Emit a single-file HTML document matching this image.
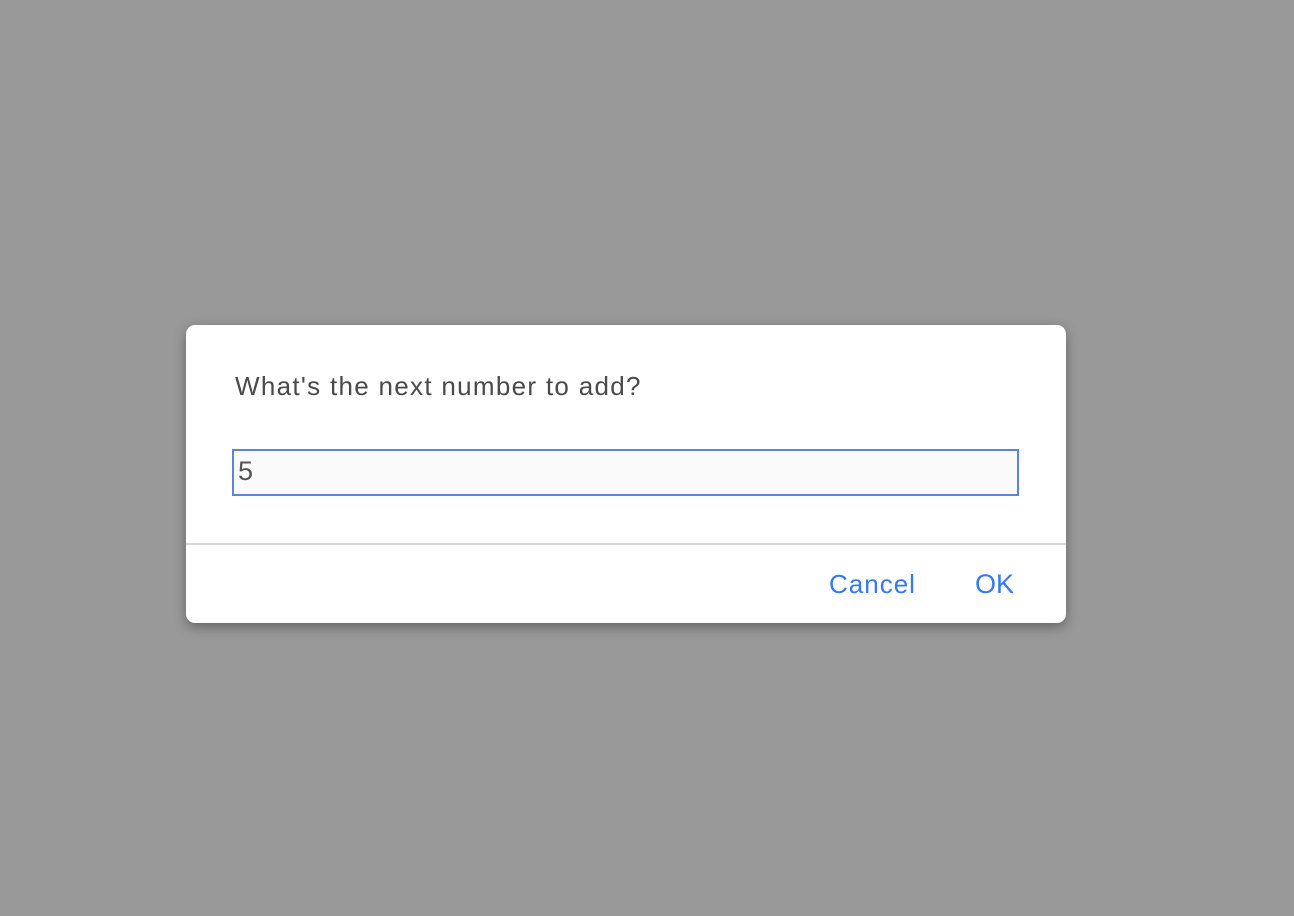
<!DOCTYPE html>
<html><head><style>
html,body{margin:0;padding:0;width:1294px;height:916px;background:#999;overflow:hidden;font-family:"Liberation Sans",sans-serif}
.d{position:absolute;left:186px;top:325px;width:880px;height:298px;background:#fff;border-radius:9px;box-shadow:0 4px 12px rgba(0,0,0,.35)}
.q{position:absolute;left:49px;top:46px;font-size:26px;letter-spacing:1.3px;color:#4a4a4a;white-space:nowrap}
.in{position:absolute;left:46px;top:124px;width:783px;height:43px;background:#fafafa;border:2px solid #5b86d6}
.in span{position:absolute;left:4px;top:5px;font-size:27px;color:#555}
.hr{position:absolute;left:0;right:0;top:218px;height:2px;background:#d6d6d6}
.b{position:absolute;top:244px;font-size:26px;letter-spacing:1px;color:#3478f6}
</style></head><body>
<div class="d">
<div class="q">What's the next number to add?</div>
<div class="in"><span>5</span></div>
<div class="hr"></div>
<div class="b" style="left:643px">Cancel</div>
<div class="b" style="left:789px;letter-spacing:0;font-size:27px">OK</div>
</div>
</body></html>
